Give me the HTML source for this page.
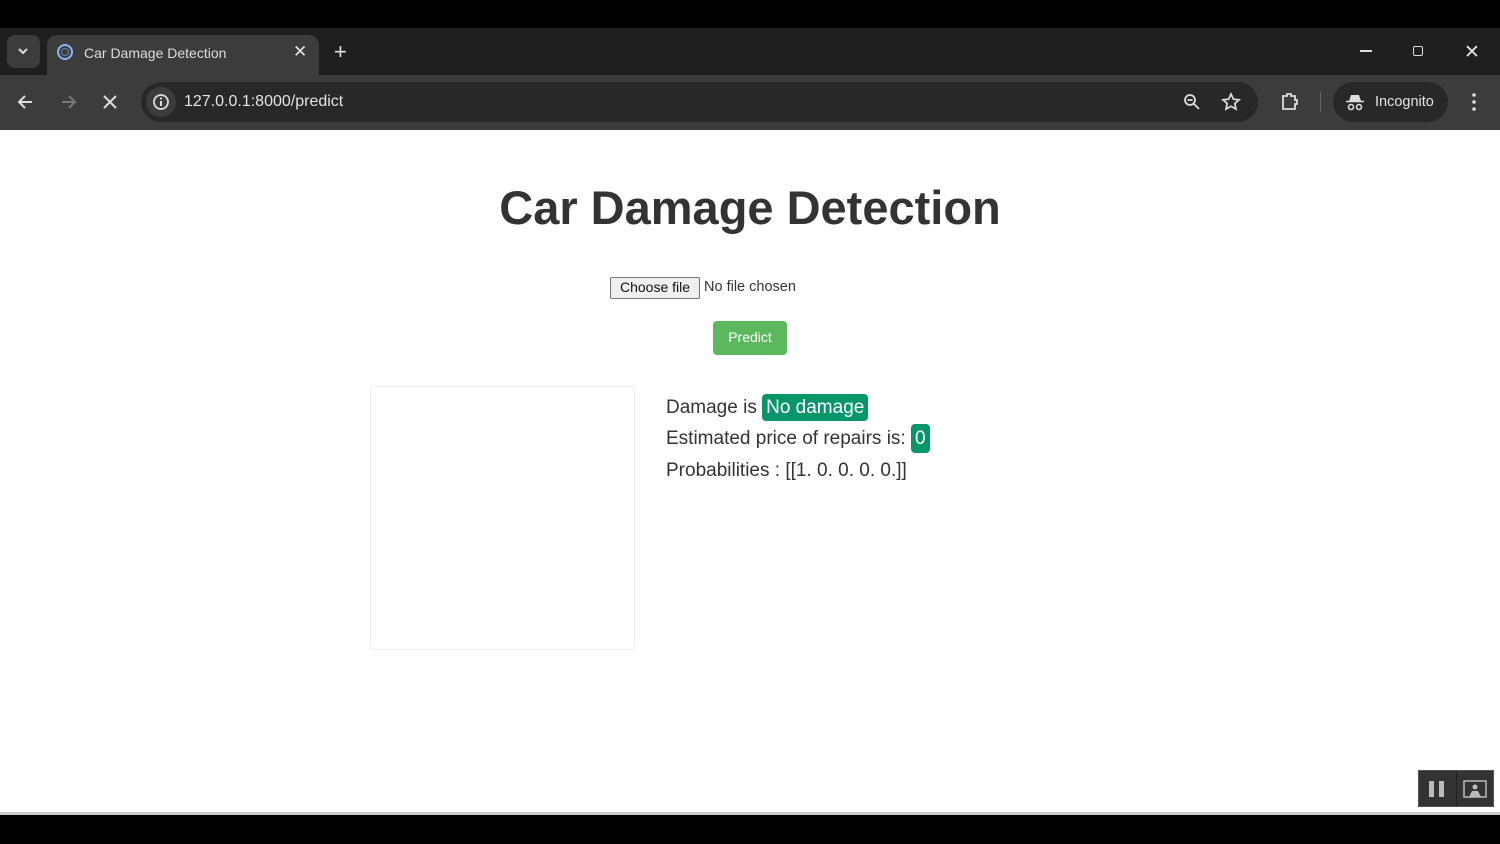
<!DOCTYPE html>
<html><head><style>
*{margin:0;padding:0;box-sizing:border-box}
body{width:1500px;height:844px;background:#000;position:relative;overflow:hidden;font-family:"Liberation Sans",Arial,sans-serif}
.abs{position:absolute}
.tabbar{left:0;top:28px;width:1500px;height:47px;background:#1f1f1f}
.tab{left:47px;top:35px;width:272px;height:42px;background:#3c3c3c;border-radius:10px 10px 0 0}
.toolbar{left:0;top:75px;width:1500px;height:55px;background:#3c3c3c}
.omni{left:141px;top:82px;width:1117px;height:40px;background:#282828;border-radius:20px}
.page{left:0;top:130px;width:1500px;height:683px;background:#fff}
.t{color:#e3e3e3;font-size:14px}
</style></head><body>
<div class="abs tabbar"></div>
<div class="abs" style="left:7px;top:35px;width:33px;height:33px;background:#3c3c3c;border-radius:8px"></div>
<svg class="abs" style="left:16px;top:46px" width="14" height="10"><path d="M3 3l4 4 4-4" stroke="#ddd" stroke-width="2" fill="none"/></svg>
<div class="abs tab"></div>
<svg class="abs" style="left:56px;top:43px" width="18" height="18"><circle cx="9" cy="9" r="7" stroke="#8ab4f8" stroke-width="2" fill="none"/><circle cx="9" cy="9" r="3.5" stroke="#8ab4f8" stroke-width="1" fill="none" opacity=".6"/></svg>
<div class="abs t" style="left:84px;top:45px;font-size:14px;color:#ddd">Car Damage Detection</div>
<div class="abs t" style="left:293px;top:42px;font-size:17px">✕</div>
<div class="abs t" style="left:334px;top:39px;font-size:22px">+</div>
<div class="abs" style="left:1360px;top:50px;width:12px;height:2px;background:#ddd"></div>
<div class="abs" style="left:1413px;top:46px;width:10px;height:10px;border:1.5px solid #ddd;border-radius:2px"></div>
<div class="abs t" style="left:1464px;top:41px;font-size:19px">✕</div>
<div class="abs toolbar"></div>
<svg class="abs" style="left:16px;top:92px" width="20" height="20"><path d="M16 10H4M9 4l-6 6 6 6" stroke="#ddd" stroke-width="2" fill="none"/></svg>
<svg class="abs" style="left:58px;top:92px" width="20" height="20"><path d="M4 10h12M11 4l6 6-6 6" stroke="#777" stroke-width="2" fill="none"/></svg>
<svg class="abs" style="left:101px;top:93px" width="18" height="18"><path d="M3 3l12 12M15 3L3 15" stroke="#ddd" stroke-width="2"/></svg>
<div class="abs omni"></div>
<div class="abs" style="left:146px;top:87px;width:30px;height:30px;background:#3c3c3c;border-radius:15px"></div>
<svg class="abs" style="left:151px;top:92px" width="20" height="20"><circle cx="10" cy="10" r="7" stroke="#ddd" stroke-width="1.8" fill="none"/><path d="M10 9v5" stroke="#ddd" stroke-width="2"/><circle cx="10" cy="6.5" r="1.1" fill="#ddd"/></svg>
<div class="abs t" style="left:184px;top:93px;font-size:16px">127.0.0.1:8000/predict</div>
<svg class="abs" style="left:1182px;top:92px" width="20" height="20"><circle cx="8" cy="8" r="5" stroke="#ddd" stroke-width="1.8" fill="none"/><path d="M12 12l5 5M5.5 8h5" stroke="#ddd" stroke-width="1.8"/></svg>
<svg class="abs" style="left:1220px;top:91px" width="22" height="22"><path d="M11 3l2.4 5.2 5.6.6-4.2 3.8 1.2 5.5L11 15.3 6 18.1l1.2-5.5L3 8.8l5.6-.6z" stroke="#ddd" stroke-width="1.7" fill="none"/></svg>
<svg class="abs" style="left:1279px;top:90px" width="22" height="22"><path d="M4 6h4V4h4v2h4v4h2v4h-2v5H4z" stroke="#ddd" stroke-width="1.8" fill="none"/></svg>
<div class="abs" style="left:1320px;top:92px;width:1px;height:20px;background:#666"></div>
<div class="abs" style="left:1333px;top:82px;width:115px;height:40px;background:#282828;border-radius:20px"></div>
<svg class="abs" style="left:1345px;top:92px" width="20" height="20"><path d="M6 3h8l2 6H4z" fill="#ddd"/><path d="M1 9.5h18" stroke="#ddd" stroke-width="1.6"/><circle cx="6" cy="15" r="2.5" stroke="#ddd" stroke-width="1.6" fill="none"/><circle cx="14" cy="15" r="2.5" stroke="#ddd" stroke-width="1.6" fill="none"/></svg>
<div class="abs t" style="left:1375px;top:94px;font-size:14.5px">Incognito</div>
<svg class="abs" style="left:1468px;top:92px" width="12" height="20"><circle cx="6" cy="3" r="1.8" fill="#ddd"/><circle cx="6" cy="10" r="1.8" fill="#ddd"/><circle cx="6" cy="17" r="1.8" fill="#ddd"/></svg>
<div class="abs page"></div>
<div class="abs" style="left:0;top:180px;width:1500px;text-align:center;font-size:47px;font-weight:bold;color:#333">Car Damage Detection</div>
<div class="abs" style="left:610px;top:277px;width:90px;height:22px;background:#efefef;border:1px solid #767676;border-radius:2px;font-size:14px;color:#111;text-align:center;line-height:19px">Choose file</div>
<div class="abs" style="left:704px;top:279px;font-size:14.5px;color:#333">No file chosen</div>
<div class="abs" style="left:713px;top:321px;width:74px;height:34px;background:#5cb85c;border-radius:4px;color:#fff;font-size:14px;text-align:center;line-height:32px">Predict</div>
<div class="abs" style="left:370px;top:386px;width:265px;height:264px;border:1px solid #eee;border-radius:4px"></div>
<div class="abs" style="left:666px;top:397px;font-size:19px;color:#333;line-height:22px">Damage is <span style="background:#079669;color:#fff;padding:3px 4px;border-radius:4px">No damage</span></div>
<div class="abs" style="left:666px;top:428px;font-size:19px;color:#333;line-height:22px">Estimated price of repairs is: <span style="background:#079669;color:#fff;padding:4px 4px;border-radius:4px">0</span></div>
<div class="abs" style="left:666px;top:460px;font-size:19px;color:#333">Probabilities : [[1. 0. 0. 0. 0.]]</div>
<div class="abs" style="left:0;top:812px;width:1500px;height:3px;background:#ccc"></div>
<div class="abs" style="left:1418px;top:770px;width:76px;height:37px;background:#333;border:1px solid #555"></div>
<div class="abs" style="left:1429px;top:781px;width:5px;height:16px;background:#bbb"></div>
<div class="abs" style="left:1439px;top:781px;width:5px;height:16px;background:#bbb"></div>
<div class="abs" style="left:1456px;top:771px;width:1px;height:35px;background:#222"></div>
<svg class="abs" style="left:1463px;top:780px" width="24" height="18"><rect x="1" y="1" width="22" height="16" stroke="#bbb" stroke-width="1.5" fill="none"/><circle cx="12" cy="7" r="2.5" fill="#bbb"/><path d="M6 17l3-6h6l3 6z" fill="#bbb"/></svg>
</body></html>
